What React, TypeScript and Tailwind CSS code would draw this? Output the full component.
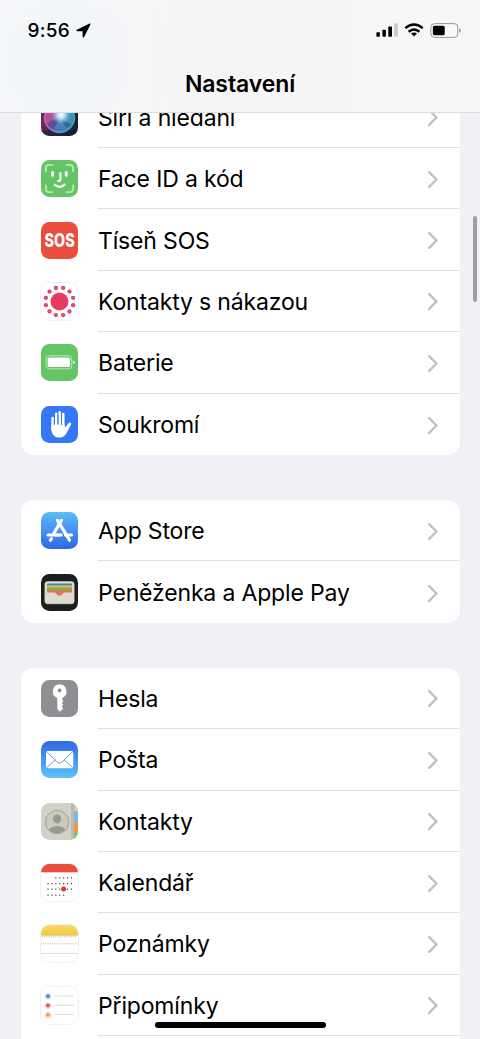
import React from "react";

const SiriIcon = () => (
  <>
    <defs>
      <linearGradient id="siriBg" x1="0" y1="0" x2="1" y2="0">
        <stop offset="0" stopColor="#7a2358" />
        <stop offset="0.4" stopColor="#35265c" />
        <stop offset="1" stopColor="#142238" />
      </linearGradient>
      <linearGradient id="siriOrb" x1="0" y1="0.3" x2="1" y2="0.7">
        <stop offset="0" stopColor="#e0407f" />
        <stop offset="0.38" stopColor="#8d62ac" />
        <stop offset="0.6" stopColor="#4a86c6" />
        <stop offset="1" stopColor="#2f98a4" />
      </linearGradient>
      <radialGradient id="siriGlow">
        <stop offset="0" stopColor="#ffffff" />
        <stop offset="0.35" stopColor="#d8f3ff" stopOpacity="0.85" />
        <stop offset="1" stopColor="#8ccdf0" stopOpacity="0" />
      </radialGradient>
    </defs>
    <rect width="37" height="37" fill="url(#siriBg)" />
    <path d="M0 31h37v6H0z" fill="#15152f" opacity="0.5" />
    <circle cx="18.500" cy="18.500" r="15.300" fill="url(#siriOrb)" stroke="#7fa6bf" strokeWidth="0.900" />
    <path d="M6 25q6-5 12-4q8 1 12 5q-5 5-12 5q-8 0-12-6z" fill="#26356f" opacity="0.45" />
    <path d="M19 19l7 11h-13z" fill="#5aa3d8" opacity="0.500" />
    <circle cx="20" cy="16" r="9.500" fill="url(#siriGlow)" />
  </>
);

const FaceIdIcon = () => (
  <>
    <rect width="37" height="37" fill="#65c466" />
    <g fill="none" stroke="#b9e6b5" strokeWidth="1.900" strokeLinecap="round">
      <path d="M4.900 11.500V7.900a3 3 0 0 1 3-3h3.600M25.500 4.900h3.600a3 3 0 0 1 3 3v3.600M32.100 25.500v3.600a3 3 0 0 1-3 3h-3.600M11.500 32.100H7.900a3 3 0 0 1-3-3v-3.600" />
    </g>
    <g fill="none" stroke="#fff" strokeLinecap="round">
      <path d="M11.600 12.600v2.800M25.300 12.600v2.800" strokeWidth="2.900" />
      <path d="M19.400 13v6.200q0 1.800-2.200 1.800" strokeWidth="2.100" />
      <path d="M13.800 24.700q4.800 4.300 9.800 0" strokeWidth="2.200" />
    </g>
  </>
);

const SosIcon = () => (
  <>
    <rect width="37" height="37" fill="#ea4c3d" />
    <text
      x="3.600"
      y="25"
      fill="#fff"
      fontFamily="Inter, sans-serif"
      fontWeight="800"
      fontSize="18.800"
      textLength="30"
      lengthAdjust="spacingAndGlyphs"
    >
      SOS
    </text>
  </>
);

const ExposureIcon = () => (
  <>
    <rect width="37" height="37" fill="#fff" />
    <circle cx="18.500" cy="18.500" r="9" fill="#e63b5f" />
    {Array.from({ length: 12 }, (_, i) => {
      const a = ((15 + i * 30) * Math.PI) / 180;
      const x = 18.5 + 14.1 * Math.cos(a);
      const y = 18.5 + 14.1 * Math.sin(a);
      return (
        <g key={i}>
          <circle cx={x} cy={y} r="2.150" fill="#d93d67" />
          <circle cx={x} cy={y} r="0.600" fill="#ed8ba5" />
        </g>
      );
    })}
  </>
);

const BatteryIcon = () => (
  <>
    <rect width="37" height="37" fill="#65c466" />
    <rect x="5" y="11.800" width="25.700" height="13" rx="3.200" fill="none" stroke="#c7ebc4" strokeWidth="0.900" />
    <rect x="6.700" y="13.500" width="22.300" height="9.600" rx="1.700" fill="#fff" />
    <path d="M31.900 16.200q2 .6 2 2.100t-2 2.100z" fill="#c7ebc4" />
  </>
);

const PrivacyIcon = () => (
  <>
    <rect width="37" height="37" fill="#3578f6" />
    <g stroke="#fff" strokeWidth="2.500" strokeLinecap="round" fill="none">
      <path d="M11.600 12v12M15.200 7.700v14M18.700 6.300v15M22.300 8v15" />
    </g>
    <path
      d="M10.350 18.500v4.500c0 5 3.300 8.600 7.800 8.600 4.200 0 6.300-2.400 7.900-5.700l4-7.500c.7-1.400-1.400-2.500-2.600-1.200l-2.900 3.700-1 .3v-2.700z"
      fill="#fff"
    />
    <path d="M13.400 10.500v8.300M16.950 9v9.500M20.500 9v9.800" stroke="#3578f6" strokeWidth="0.900" />
  </>
);

const AppStoreIcon = () => (
  <>
    <defs>
      <linearGradient id="storeBg" x1="0" y1="0" x2="0" y2="1">
        <stop offset="0" stopColor="#5bbcf6" />
        <stop offset="1" stopColor="#2f67e8" />
      </linearGradient>
    </defs>
    <rect width="37" height="37" fill="url(#storeBg)" />
    <g stroke="#fff" strokeWidth="3.200" strokeLinecap="round" fill="none">
      <path d="M16.500 8.400L28.500 28.200" />
      <path d="M20.400 8.400L12.600 21.800" />
      <path d="M7 23h10.200M24.500 23h6" />
      <path d="M10.400 26.600l-1 1.600" />
    </g>
    <path d="M14 23h7.500" stroke="#fff" strokeWidth="3.200" />
  </>
);

const WalletIcon = () => (
  <>
    <defs>
      <clipPath id="walletClip">
        <rect x="4" y="7.700" width="29" height="22" rx="2.400" />
      </clipPath>
    </defs>
    <rect width="37" height="37" fill="#1d1d1d" />
    <g clipPath="url(#walletClip)">
      <rect x="4" y="7.700" width="29" height="22" fill="#dddbd0" />
      <rect x="6" y="9.500" width="25" height="3" rx="1" fill="#3f83b0" />
      <rect x="6" y="11.300" width="25" height="4" rx="1" fill="#cfc060" />
      <rect x="6" y="13.400" width="25" height="4.500" rx="1" fill="#93a550" />
      <path d="M6 16.600h25v2h-7.500c-1.600 0-2 3.200-5 3.200s-3.400-3.200-5-3.200H6z" fill="#e5725c" />
    </g>
    <rect x="4" y="7.700" width="29" height="22" rx="2.400" fill="none" stroke="#dddbd0" strokeWidth="0.900" />
  </>
);

const KeyIcon = () => (
  <>
    <rect width="37" height="37" fill="#8e8e93" />
    <path
      d="M18.600 4.300a7.100 7.100 0 0 0-2.300 13.700v11l2.600 2.700 3.300-3.200-1.600-2 1.800-1.800-1.700-1.800 1.700-1.600-1-1.300v-2.200A7.100 7.100 0 0 0 18.600 4.300z"
      fill="#fff"
    />
    <circle cx="18.600" cy="10.500" r="1.900" fill="#8e8e93" />
  </>
);

const MailIcon = () => (
  <>
    <defs>
      <linearGradient id="mailBg" x1="0" y1="0" x2="0" y2="1">
        <stop offset="0" stopColor="#3067e7" />
        <stop offset="1" stopColor="#5ec3f9" />
      </linearGradient>
    </defs>
    <rect width="37" height="37" fill="url(#mailBg)" />
    <rect x="5" y="10" width="27.300" height="17.300" rx="1.800" fill="#fff" />
    <path
      d="M5.600 10.800l10.800 10.300q2.200 2 4.400 0l10.900-10.300M5.600 26.600l8.800-7.900M31.700 26.600l-8.800-7.900"
      fill="none"
      stroke="#5790e2"
      strokeWidth="0.900"
    />
  </>
);

const ContactsIcon = () => (
  <>
    <defs>
      <clipPath id="personClip">
        <circle cx="16.100" cy="19" r="11.200" />
      </clipPath>
    </defs>
    <rect width="37" height="37" fill="#d2d1c6" />
    <rect x="30" width="3" height="37" fill="#bdbbae" />
    <rect x="33" width="4" height="9" fill="#cccbc0" />
    <rect x="33" y="9.300" width="4" height="9.500" fill="#74b9f0" />
    <rect x="33" y="19.300" width="4" height="9.500" fill="#f29a37" />
    <rect x="33" y="29.300" width="4" height="7.700" fill="#6bcb5c" />
    <path d="M32.600 9h4.400M32.600 19h4.400M32.600 29h4.400" stroke="#8f9086" strokeWidth="0.600" />
    <circle cx="16.100" cy="19" r="11.600" fill="#cbcabf" stroke="#9c9b93" strokeWidth="0.900" />
    <g clipPath="url(#personClip)" fill="#9a9991">
      <ellipse cx="16.100" cy="15.900" rx="4.100" ry="4.500" />
      <ellipse cx="16.100" cy="29" rx="9" ry="6" />
    </g>
  </>
);

const calendarDots = [
  { y: 13.8, from: 2, to: 6 },
  { y: 19.5, from: 0, to: 6 },
  { y: 25.1, from: 0, to: 6 },
  { y: 31, from: 0, to: 4 },
];

const CalendarIcon = () => (
  <>
    <rect width="37" height="37" fill="#fff" />
    <rect width="37" height="8.300" fill="#e84d3d" />
    {calendarDots.map((row) =>
      Array.from({ length: row.to - row.from + 1 }, (_, i) => (
        <rect key={i} x={6.4 + (row.from + i) * 3.9} y={row.y - 0.6} width="1.300" height="1.300" rx="0.500" fill="#333" />
      ))
    )}
    <circle cx="22.600" cy="25.100" r="2.500" fill="#e0362e" />
  </>
);

const NotesIcon = () => (
  <>
    <defs>
      <linearGradient id="notesTop" x1="0" y1="0" x2="0" y2="1">
        <stop offset="0" stopColor="#f8da6a" />
        <stop offset="1" stopColor="#f2c93b" />
      </linearGradient>
    </defs>
    <rect width="37" height="37" fill="#fff" />
    <rect width="37" height="10" fill="url(#notesTop)" />
    <path d="M0 10.300h37" stroke="#c2b680" strokeWidth="0.700" />
    <path d="M1 11.800h35" stroke="#aaa" strokeWidth="1" strokeDasharray="0.900 1.300" />
    <path d="M0 18.800h37M0 28.400h37" stroke="#cfcfd2" strokeWidth="0.700" />
  </>
);

const RemindersIcon = () => (
  <>
    <rect width="37" height="37" fill="#fff" />
    {[
      { y: 9.3, color: "#3d78dc", ring: "#a9c6f5" },
      { y: 18.6, color: "#dd4a3c", ring: "#f3aaa4" },
      { y: 27.9, color: "#ec9a41", ring: "#f8d09d" },
    ].map((item) => (
      <g key={item.y}>
        <circle cx="7" cy={item.y} r="2.700" fill="#fff" stroke={item.ring} strokeWidth="0.900" />
        <circle cx="7" cy={item.y} r="1.800" fill={item.color} />
        <path d={`M13.700 ${item.y - 0.3}h19`} stroke="#d0d0d3" strokeWidth="0.800" />
      </g>
    ))}
  </>
);

type Item = {
  label: string;
  icon: React.FC;
  outlined?: boolean;
};

const groups: Item[][] = [
  [
    { label: "Siri a hledání", icon: SiriIcon },
    { label: "Face ID a kód", icon: FaceIdIcon },
    { label: "Tíseň SOS", icon: SosIcon },
    { label: "Kontakty s nákazou", icon: ExposureIcon, outlined: true },
    { label: "Baterie", icon: BatteryIcon },
    { label: "Soukromí", icon: PrivacyIcon },
  ],
  [
    { label: "App Store", icon: AppStoreIcon },
    { label: "Peněženka a Apple Pay", icon: WalletIcon },
  ],
  [
    { label: "Hesla", icon: KeyIcon },
    { label: "Pošta", icon: MailIcon },
    { label: "Kontakty", icon: ContactsIcon },
    { label: "Kalendář", icon: CalendarIcon, outlined: true },
    { label: "Poznámky", icon: NotesIcon, outlined: true },
    { label: "Připomínky", icon: RemindersIcon, outlined: true },
    { label: "", icon: () => null },
  ],
];

const Row = ({ item, last }: { item: Item; last: boolean }) => {
  const Icon = item.icon;
  return (
    <div className="flex h-[61.4px] pl-5">
      <div className="flex w-[57px] shrink-0 items-center">
        {item.label && (
          <svg
            viewBox="0 0 37 37"
            className={`h-[37px] w-[37px] rounded-[8.500px] ${item.outlined ? "shadow-[0_0_0_0.8px_#ededef]" : ""}`}
          >
            <Icon />
          </svg>
        )}
      </div>
      <div className={`flex flex-1 items-center justify-between pt-[2px] pr-[22px] ${last ? "" : "border-b border-[#e2e2e4]"}`}>
        <span className="pt-[1px] text-[23px] leading-none font-[370] tracking-[-0.16px] whitespace-nowrap text-black">
          {item.label}
        </span>
        {item.label && (
          <svg viewBox="0 0 10 17" className="h-[17px] w-[10px]" fill="none">
            <path d="M1.200 1.200L8.500 8.500L1.200 15.800" stroke="#c0c0c3" strokeWidth="2.400" strokeLinecap="round" strokeLinejoin="round" />
          </svg>
        )}
      </div>
    </div>
  );
};

const StatusBar = () => (
  <div className="flex h-[60px] items-center justify-between pr-[19px] pl-[27.500px]">
    <div className="flex items-center gap-[6px]">
      <span className="text-[19px] leading-none font-medium tracking-[0.3px]">9:56</span>
      <svg viewBox="0 0 15 15" className="h-[15px] w-[15px]">
        <path d="M13.600 .6L.9 6.700c-1 .5-.6 1.500.4 1.500h5.300v5.400c0 1 1.100 1.200 1.500.3L14.400 1.500c.4-.8-.1-1.200-.8-.9z" fill="#000" />
      </svg>
    </div>
    <div className="flex items-center">
      <svg viewBox="0 0 22 14" className="mr-[6px] h-[14px] w-[22px]">
        <rect x="0.400" y="9.300" width="3.500" height="4.500" rx="0.700" />
        <rect x="6.400" y="6.700" width="3.500" height="7.100" rx="0.700" />
        <rect x="12.300" y="3.600" width="3.700" height="10.200" rx="0.700" />
        <rect x="18.200" y="0.300" width="3.700" height="13.500" rx="0.700" fill="#c9c9ca" />
      </svg>
      <svg viewBox="0 0 20 14" className="mr-[6px] h-[14px] w-[20px]" fill="none" stroke="#000">
        <path d="M1.300 5.100Q10-2.200 18.700 5.100" strokeWidth="2.500" />
        <path d="M4.600 8.700Q10 4.200 15.400 8.700" strokeWidth="2.500" />
        <path d="M10 13.600l-3-3q3-2.300 6 0z" fill="#000" stroke="none" />
      </svg>
      <svg viewBox="0 0 31 15" className="h-[15px] w-[31px]">
        <rect x="0.800" y="0.600" width="27" height="13.800" rx="3.800" fill="#fafafa" stroke="#8b8b8d" strokeWidth="0.900" />
        <rect x="2.900" y="2.700" width="11.800" height="9.600" rx="1.500" />
        <path d="M29.400 5.200q1.400.7 1.400 2.300t-1.400 2.300z" fill="#8b8b8d" />
      </svg>
    </div>
  </div>
);

export default function App() {
  return (
    <div className="relative flex h-[1039px] w-[480px] flex-col overflow-hidden bg-[#f1f0f6] font-['Inter',sans-serif] text-black">
      <header className="h-[113px] shrink-0 border-b border-[#dcdce0] bg-linear-to-r from-[#f7f8fa] via-[#f5f5f5] to-[#f7f7f9]">
        <div className="h-full bg-[radial-gradient(circle_at_60px_60px,#f1f5f9_0px,transparent_110px)]">
          <StatusBar />
          <h1 className="pt-[13px] text-center text-[23px] leading-none font-semibold tracking-[-0.1px]">Nastavení</h1>
        </div>
      </header>

      <main className="flex-1 overflow-hidden">
        <div className="-mt-[26.4px] flex flex-col gap-[45px] pr-[20.500px] pl-[21px]">
          {groups.map((items, g) => (
            <section key={g} className="rounded-[13px] bg-white">
              {items.map((item, i) => (
                <Row key={i} item={item} last={i === items.length - 1} />
              ))}
            </section>
          ))}
        </div>
      </main>

      {/* Scroll indicator and home bar float over the list */}
      <div className="absolute top-[216px] right-[3.500px] h-[86px] w-[4px] rounded-full bg-[#9e9da3]" />
      <div className="absolute bottom-[11px] left-[154.500px] h-[6px] w-[171.500px] rounded-full bg-black" />
    </div>
  );
}
